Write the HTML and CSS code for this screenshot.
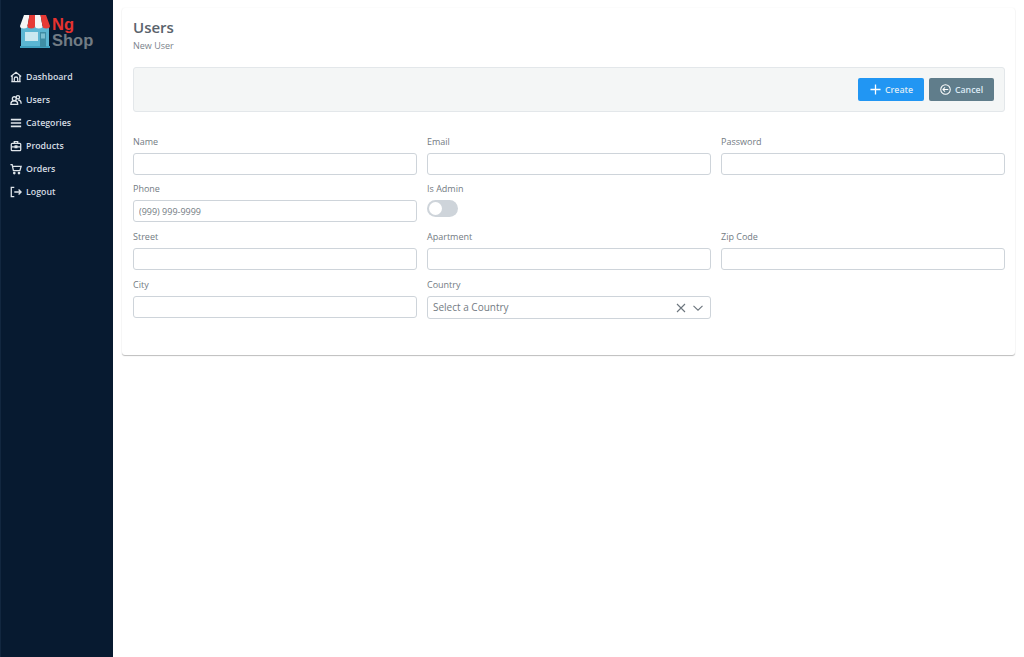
FILE: index.html
```html
<!DOCTYPE html>
<html lang="en">
<head>
<meta charset="utf-8">
<title>Users</title>
<link rel="stylesheet" href="styles.css">
</head>
<body>
<div class="app">
  <aside class="sidebar">
    <div class="logo">
      <svg class="logo-mark" viewBox="0 0 34 34" width="34" height="34">
        <rect x="3" y="11" width="28" height="21" fill="#5bb6d3"/>
        <rect x="2" y="31" width="30" height="2" fill="#3f9fbf"/>
        <rect x="7" y="17" width="13" height="9" fill="#c9e8f0"/>
        <rect x="22" y="17" width="6" height="15" fill="#3f8ea6"/>
        <rect x="23" y="18.500" width="4" height="5" fill="#7cc0d2"/>
        <path d="M6 0h5.500L9.500 11a3.750 2.500 0 0 1-7.500 0z" fill="#f5f5f5"/>
        <path d="M11.500 0H17V11a3.750 2.500 0 0 1-7.500 0z" fill="#e63a35"/>
        <path d="M17 0h5.500l2 11a3.750 2.500 0 0 1-7.500 0z" fill="#f5f5f5"/>
        <path d="M22.500 0H28l4 11a3.750 2.500 0 0 1-7.500 0z" fill="#e63a35"/>
      </svg>
      <div class="logo-text"><span class="logo-ng">Ng</span><span class="logo-shop">Shop</span></div>
    </div>
    <nav class="nav">
      <a class="nav-item"><svg viewBox="0 0 14 14" class="nav-icon"><path d="M1 6.500 7 1.500l6 5M2.500 5.500V12.500h9V5.500M5 12.500V9a2 2 0 0 1 4 0v3.500M1.500 12.500h11"/></svg><span>Dashboard</span></a>
      <a class="nav-item"><svg viewBox="0 0 14 14" class="nav-icon"><circle cx="5" cy="5.500" r="2.300"/><circle cx="9.200" cy="3.800" r="2"/><path d="M1 12c0-5.500 8-5.500 8 0zM9.500 7c2.200 0 3.500 2 3.500 4.500"/></svg><span>Users</span></a>
      <a class="nav-item"><svg viewBox="0 0 14 14" class="nav-icon nav-icon-bold"><path d="M1 3h12M1 7h12M1 11h12"/></svg><span>Categories</span></a>
      <a class="nav-item"><svg viewBox="0 0 14 14" class="nav-icon"><rect x="1.500" y="4" width="11" height="8.500" rx="1"/><path d="M5 4V2h4v2M1.500 8h11M6 7h2v2H6z"/></svg><span>Products</span></a>
      <a class="nav-item"><svg viewBox="0 0 14 14" class="nav-icon"><path d="M.5 2h2l1.500 7h7.500l1.500-5H3"/><circle cx="5" cy="11.800" r=".8"/><circle cx="10.500" cy="11.800" r=".8"/></svg><span>Orders</span></a>
      <a class="nav-item"><svg viewBox="0 0 14 14" class="nav-icon"><path d="M5 1.500H1.500v11H5M5 7h8M10 4l3 3-3 3"/></svg><span>Logout</span></a>
    </nav>
  </aside>
  <main class="content">
    <section class="card">
      <h1 class="title">Users</h1>
      <p class="subtitle">New User</p>
      <div class="toolbar">
        <button class="btn btn-create"><svg viewBox="0 0 12 12" class="btn-icon"><path d="M6 .5v11M.5 6h11"/></svg>Create</button>
        <button class="btn btn-cancel"><svg viewBox="0 0 12 12" class="btn-icon btn-icon-thin"><circle cx="6" cy="6" r="5.200"/><path d="M9 6H3.200M5.500 3.600 3.200 6l2.300 2.400"/></svg>Cancel</button>
      </div>
      <form class="form">
        <div class="field"><label>Name</label><input class="input" type="text"></div>
        <div class="field"><label>Email</label><input class="input" type="text"></div>
        <div class="field"><label>Password</label><input class="input" type="text"></div>
        <div class="field"><label>Phone</label><input class="input" type="text" placeholder="(999) 999-9999"></div>
        <div class="field"><label>Is Admin</label><span class="switch"><span class="knob"></span></span></div>
        <div class="field"></div>
        <div class="field"><label>Street</label><input class="input" type="text"></div>
        <div class="field"><label>Apartment</label><input class="input" type="text"></div>
        <div class="field"><label>Zip Code</label><input class="input" type="text"></div>
        <div class="field"><label>City</label><input class="input" type="text"></div>
        <div class="field"><label>Country</label>
          <div class="select"><span class="select-text">Select a Country</span>
            <svg viewBox="0 0 10 10" class="sel-icon"><path d="M1 1l8 8M9 1l-8 8"/></svg>
            <svg viewBox="0 0 10 10" class="sel-icon"><path d="M.5 2.800 5 7.200l4.500-4.400"/></svg>
          </div>
        </div>
      </form>
    </section>
  </main>
</div>
</body>
</html>
```
FILE: styles.css
```css
* { box-sizing: border-box; }
html, body { margin: 0; height: 100%; }
body { font-family: "Open Sans", "Liberation Sans", sans-serif; background: #fff; color: #495057; }
.app { display: flex; height: 657px; }
.sidebar { width: 113px; flex: none; background: #071a30; border-left: 1px solid #12273f; }
.logo { display: flex; align-items: flex-start; padding: 15px 0 0 17px; height: 65px; }
.logo-text { display: flex; flex-direction: column; padding-top: 1px; font-family: "Liberation Sans", sans-serif; font-weight: 700; font-size: 16.500px; line-height: 16px; }
.logo-ng { color: #e5332f; }
.logo-shop { color: #727c84; }
.nav { display: flex; flex-direction: column; }
.nav-item { display: flex; align-items: center; gap: 4px; height: 23px; padding-left: 9px; font-size: 8.800px; font-weight: 600; color: #d6dde3; }
.nav-icon { width: 12px; height: 12px; fill: none; stroke: #dfe5ea; stroke-width: 1.500; }
.nav-icon-bold { stroke-width: 1.900; }
.content { flex: 1; padding: 8px 9px 0; }
.card { background: #fff; height: 347px; padding: 11px 10px 0 11px; border-radius: 3px; box-shadow: 0 1px 1px rgba(0,0,0,.25), 0 0 2px rgba(0,0,0,.06); }
.title { margin: 0; font-size: 15px; line-height: 17px; font-weight: 600; color: #5a636c; }
.subtitle { margin: 4px 0 0; font-size: 9px; line-height: 12px; color: #7b838b; }
.toolbar { display: flex; justify-content: flex-end; align-items: center; gap: 5px; height: 45px; margin-top: 15px; padding-right: 10px; background: #f4f6f6; border: 1px solid #e3e7ea; border-radius: 3px; }
.btn { display: flex; align-items: center; justify-content: center; gap: 4px; height: 23px; padding: 0; border: 0; border-radius: 2px; color: #dbeaf5; font: 600 8.800px "Open Sans", sans-serif; }
.btn-create { width: 66px; background: #2196f3; padding-left: 1px; }
.btn-cancel { width: 65px; background: #607d8b; }
.btn-icon { width: 11px; height: 11px; fill: none; stroke: #fff; stroke-width: 1.400; }
.btn-icon-thin { stroke-width: 1.100; }
.form { display: grid; grid-template-columns: repeat(3, 1fr); grid-template-rows: 47px 48px 48px 48px; column-gap: 10px; margin-top: 24px; }
.field { display: flex; flex-direction: column; min-width: 0; }
.field label { font-size: 9px; line-height: 11px; height: 17px; color: #737b83; }
.input { width: 100%; height: 22px; padding: 0 5px; border: 1px solid #ced4da; border-radius: 3px; background: #fff; font: 9px "Open Sans", sans-serif; color: #495057; outline: 0; }
.input::placeholder { color: #737b83; opacity: 1; }
.switch { display: block; position: relative; width: 31px; height: 17px; border-radius: 9px; background: #ced4da; }
.knob { position: absolute; left: 2px; top: 2px; width: 13px; height: 13px; border-radius: 50%; background: #fff; }
.select { display: flex; align-items: center; gap: 7px; height: 23px; padding: 0 7px 0 5px; border: 1px solid #ced4da; border-radius: 3px; }
.select-text { flex: 1; font-size: 10px; line-height: 12px; padding-bottom: 1px; color: #737b83; }
.sel-icon { width: 10px; height: 10px; fill: none; stroke: #6c757d; stroke-width: 1.100; }
```
